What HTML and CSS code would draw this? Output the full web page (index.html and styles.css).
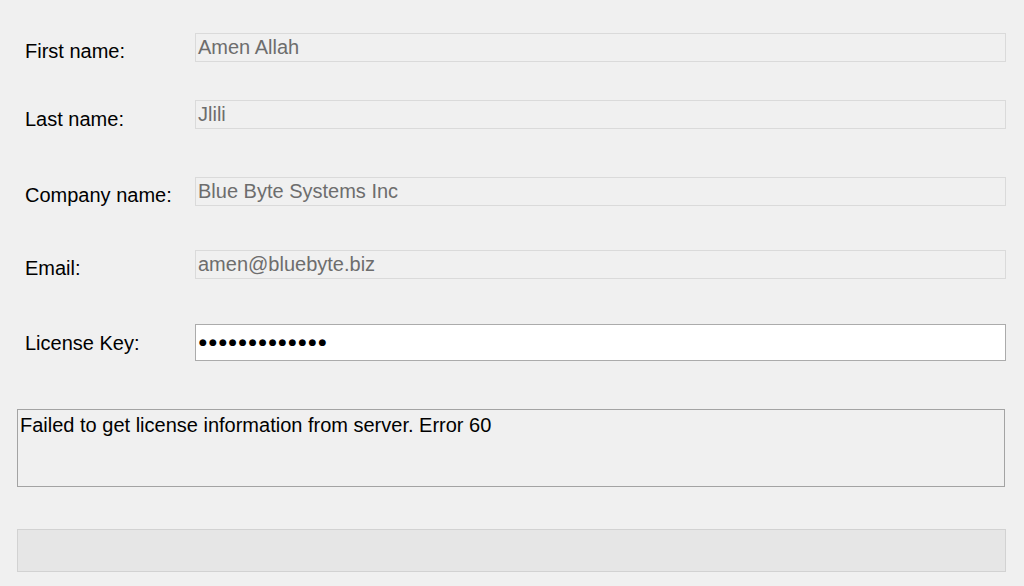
FILE: index.html
```html
<!DOCTYPE html>
<html>
<head>
<meta charset="utf-8">
<link rel="stylesheet" href="styles.css">
</head>
<body>
<div class="window">
  <div class="form">
    <label class="lbl">First name:</label>
    <div class="field">Amen Allah</div>
    <label class="lbl lbl-low">Last name:</label>
    <div class="field">Jlili</div>
    <label class="lbl">Company name:</label>
    <div class="field">Blue Byte Systems Inc</div>
    <label class="lbl">Email:</label>
    <div class="field">amen@bluebyte.biz</div>
    <label class="lbl lbl-key">License Key:</label>
    <div class="field field-key"><span class="dots">●●●●●●●●●●●●●</span></div>
  </div>
  <div class="message">Failed to get license information from server. Error 60</div>
  <div class="progress"></div>
</div>
</body>
</html>
```

FILE: styles.css
```css
html, body {
  margin: 0;
  padding: 0;
  background: #f0f0f0;
}
body {
  font-family: "Liberation Sans", Arial, sans-serif;
  font-size: 20px;
  color: #000;
  width: 1024px;
  height: 586px;
  overflow: hidden;
}
.window {
  padding-top: 33px;
  display: flex;
  flex-direction: column;
}
.form {
  display: grid;
  grid-template-columns: 170px 811px;
  grid-template-rows: 67px 77px 73px 74px 37px;
  padding-left: 25px;
}
.lbl {
  line-height: 22px;
  padding-top: 7px;
  align-self: start;
}
.lbl-low {
  padding-top: 8px;
}
.lbl-key {
  padding-top: 8px;
}
.field {
  box-sizing: border-box;
  height: 29px;
  border: 1px solid #dadada;
  background: #f0f0f0;
  color: #6d6d6d;
  line-height: 27px;
  padding: 0 2px;
  align-self: start;
  white-space: nowrap;
}
.field-key {
  height: 37px;
  border-color: #ababab;
  background: #fff;
  color: #000;
  line-height: 35px;
  padding-left: 3px;
}
.dots {
  font-family: "DejaVu Sans", sans-serif;
  font-size: 9px;
  letter-spacing: 2.1px;
  vertical-align: top;
}
.message {
  box-sizing: border-box;
  margin-top: 48px;
  margin-left: 17px;
  width: 988px;
  height: 78px;
  border: 1px solid #a3a3a3;
  padding: 4px 2px;
  line-height: 22px;
}
.progress {
  box-sizing: border-box;
  margin-top: 42px;
  margin-left: 17px;
  width: 989px;
  height: 43px;
  border: 1px solid #d2d2d2;
  background: #e6e6e6;
}
```
